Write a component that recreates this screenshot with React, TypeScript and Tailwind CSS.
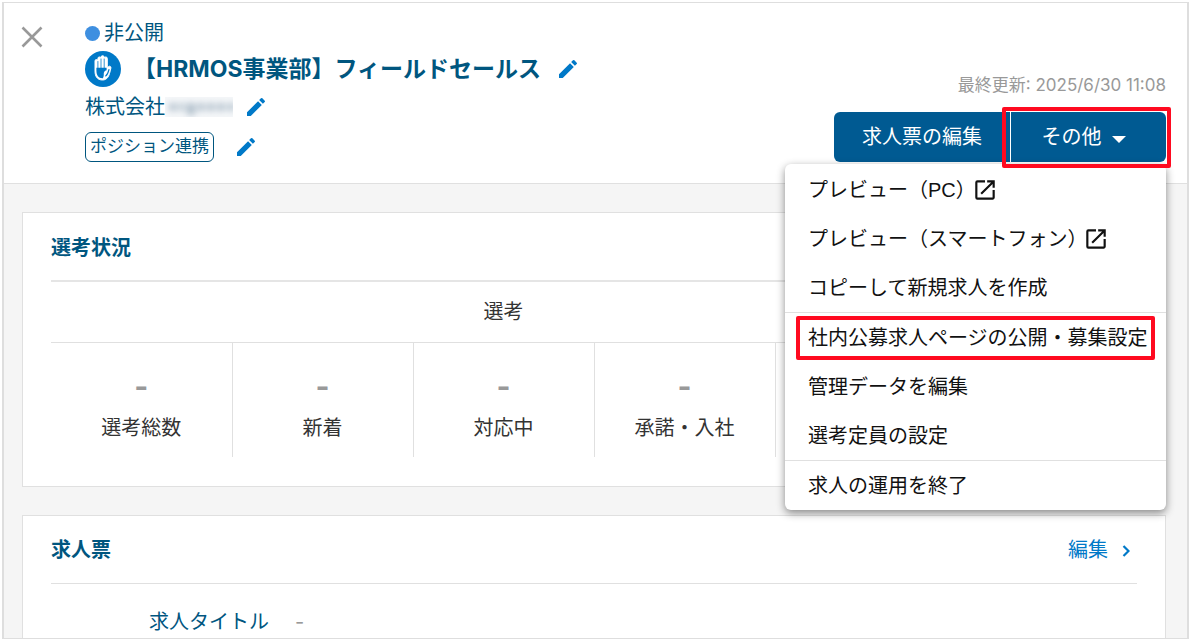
import { MdEdit, MdOpenInNew } from "react-icons/md";

const menuGroups = [
  [
    { label: "プレビュー（PC）", external: true },
    { label: "プレビュー（スマートフォン）", external: true },
    { label: "コピーして新規求人を作成" },
  ],
  [
    { label: "社内公募求人ページの公開・募集設定", marked: true },
    { label: "管理データを編集" },
    { label: "選考定員の設定" },
  ],
  [{ label: "求人の運用を終了" }],
];

const stages = ["選考総数", "新着", "対応中", "承諾・入社"];

const HandIcon = () => (
  <svg viewBox="0 0 36 36" className="size-9 shrink-0" aria-hidden="true">
    <circle cx="18" cy="18" r="18" fill="#0079c8" />
    <path
      d="M10 20V10a1.400 1.400 0 0 1 2.900 0V7.500a1.500 1.500 0 0 1 3.100 0V6.300a1.600 1.600 0 0 1 3.200 0V7.500a1.500 1.500 0 0 1 3.100 0v9.500l1-1.200c.9-1.300 3-.5 2.600 1.200-.9 4-1.600 7.200-3.100 9.300-1.300 1.800-2.900 2.700-5.300 2.700-5.200 0-7.500-3.500-7.500-9z"
      fill="#fff"
      stroke="#fff"
      strokeWidth="1"
      strokeLinejoin="round"
    />
    <path
      d="M11.400 16.800h10.200v2.400c-2.200.6-3 2.200-2.800 4 .1 1.400-.2 2.800-.9 4-4.300.2-6.500-2.600-6.500-7.700z"
      fill="#0079c8"
    />
    <path
      d="M12.900 10.500v7M16 8v9.500M19.200 8v9.500"
      stroke="#0079c8"
      strokeWidth="0.8"
      strokeLinecap="round"
    />
    <path
      d="M24 18.500c-.8 3.300-1.600 5.200-3.300 6.500"
      stroke="#0079c8"
      strokeWidth="1.100"
      fill="none"
      strokeLinecap="round"
    />
  </svg>
);

const EditButton = ({ label, className }: { label: string; className: string }) => (
  <button type="button" aria-label={label} className={`text-[#0079c8] cursor-pointer ${className}`}>
    <MdEdit className="size-6" />
  </button>
);

const ActionMenu = () => (
  <div className="absolute right-0 top-full mt-0.5 z-10 w-[381px] rounded-md bg-white pt-px text-xl text-[#111] shadow-[0_3px_8px_rgba(0,0,0,0.45)]">
    {menuGroups.map((group, i) => (
      <ul key={i} className={i > 0 ? "border-t border-[#e0e0e0]" : ""}>
        {group.map((item) => (
          <li key={item.label} className="relative">
            <button
              type="button"
              className="flex h-[49px] w-full items-center whitespace-nowrap pl-[23px] text-left cursor-pointer"
            >
              {item.label}
              {item.external && <MdOpenInNew className="-ml-1 size-[26px]" />}
            </button>
            {item.marked && (
              <span className="pointer-events-none absolute inset-x-[11px] top-[3px] h-11 border-4 border-[#ff0a20] rounded-xs" />
            )}
          </li>
        ))}
      </ul>
    ))}
  </div>
);

const Header = () => (
  <header className="flex justify-between border-b border-[#e0e0e0] bg-white pr-[21px] pb-[21px] pl-4 text-[#00567f]">
    <div className="flex items-start pt-[17px]">
      <button type="button" aria-label="閉じる" className="mt-[5px] cursor-pointer">
        <svg viewBox="0 0 24 24" className="size-6" aria-hidden="true">
          <path d="M2.500 2.500l19 19M21.500 2.500l-19 19" stroke="#999" strokeWidth="2.600" />
        </svg>
      </button>
      <div className="ml-[41px]">
        <div className="flex h-[26px] items-center gap-1 text-xl">
          <span className="size-[15px] rounded-full bg-[#3e8fe0]" />
          非公開
        </div>
        <div className="mt-[5px] flex h-9 items-center">
          <HandIcon />
          <h1 className="ml-3 whitespace-nowrap font-['Inter','Noto_Sans_CJK_JP',sans-serif] text-[23px] font-bold">
            【HRMOS事業部】フィールドセールス
          </h1>
          <EditButton label="求人名を編集" className="ml-[15px]" />
        </div>
        <div className="mt-1.5 flex h-7 items-center text-xl">
          株式会社
          <span className="flex h-5 w-[68px] items-center overflow-hidden bg-[#f5f7f9]">
            <span className="flex items-center gap-0.5 pl-1 opacity-50 blur-[3px]">
              <span className="h-2 w-2 bg-[#8299ac]" />
              <span className="h-2 w-1.5 bg-[#8ca2b3]" />
              <span className="mt-1 h-3 w-2 bg-[#6f8aa0]" />
              <span className="h-2 w-2 bg-[#8299ac]" />
              <span className="h-2 w-2 bg-[#8299ac]" />
              <span className="h-2 w-2 bg-[#8299ac]" />
              <span className="h-2 w-2 bg-[#8ca2b3]" />
            </span>
          </span>
          <EditButton label="会社名を編集" className="ml-[11px]" />
        </div>
        <div className="mt-[11px] flex h-[30px] items-center">
          <span className="flex h-[30px] items-center whitespace-nowrap rounded-md border border-[#00567f] px-1 text-[17px]">
            ポジション連携
          </span>
          <EditButton label="ポジション連携を編集" className="ml-5" />
        </div>
      </div>
    </div>

    <div className="flex flex-col items-end pt-[70px]">
      <p className="h-6 whitespace-nowrap font-['Inter','Noto_Sans_CJK_JP',sans-serif] text-[17px] leading-6 text-[#999]">
        最終更新: 2025/6/30 11:08
      </p>
      <div className="relative mt-[15px] flex h-[50px] gap-px text-xl text-white">
        <button type="button" className="w-44 rounded-l-md bg-[#005a92] cursor-pointer">
          求人票の編集
        </button>
        <div className="relative flex">
          <button
            type="button"
            aria-expanded="true"
            className="flex w-[155px] items-center justify-center gap-2.5 rounded-r-md bg-[#005a92] pr-2.5 cursor-pointer"
          >
            その他
            <svg viewBox="0 0 14 7" className="mt-1 h-[7px] w-3.5" aria-hidden="true">
              <path d="M0 0h14L7 7z" fill="#fff" />
            </svg>
          </button>
          <span className="pointer-events-none absolute -top-[5px] -right-[5px] -bottom-[6px] -left-[9px] z-20 rounded-xs border-4 border-[#ff0a20]" />
        </div>
        <ActionMenu />
      </div>
    </div>
  </header>
);

const StatusCard = () => (
  <section className="border border-[#e0e0e0] bg-white px-7 pb-[29px]">
    <h2 className="flex h-[67px] items-center pt-0.5 text-xl font-bold text-[#00567f]">選考状況</h2>
    <table className="w-full table-fixed border-collapse border-t-2 border-[#e5e5e5] text-xl text-[#333]">
      <thead>
        <tr className="h-[61px] border-b border-[#e0e0e0]">
          <th colSpan={5} className="font-normal">
            選考
          </th>
          <th />
        </tr>
      </thead>
      <tbody>
        <tr className="h-[115px] divide-x divide-[#e0e0e0] text-center">
          {stages.map((stage) => (
            <td key={stage} className="pt-3 align-middle">
              <div className="mb-3 h-8 font-[Inter] text-3xl leading-8 font-bold text-[#999]">-</div>
              <div>{stage}</div>
            </td>
          ))}
          <td />
          <td />
        </tr>
      </tbody>
    </table>
  </section>
);

const JobCard = () => (
  <section className="border border-[#e0e0e0] bg-white px-7 pb-7">
    <div className="flex h-[68px] items-center justify-between border-b border-[#e0e0e0]">
      <h2 className="text-xl font-bold text-[#00567f]">求人票</h2>
      <a href="#edit" className="flex items-center gap-3.5 pr-[7px] text-xl text-[#0079c8]">
        編集
        <svg viewBox="0 0 8 12" className="mt-0.5 h-3 w-2" aria-hidden="true">
          <path d="M1.500 1l5 5-5 5" fill="none" stroke="#0079c8" strokeWidth="2.200" />
        </svg>
      </a>
    </div>
    <dl className="flex h-[76px] items-center text-xl">
      <dt className="w-[218px] text-right text-[#00567f]">求人タイトル</dt>
      <dd className="ml-[26px] font-[Inter] text-[#999]">-</dd>
    </dl>
  </section>
);

export default function App() {
  return (
    <div className="h-screen bg-white pt-0.5 pr-1.5 pb-[3px] pl-0.5 font-['Liberation_Sans','Noto_Sans_CJK_JP',sans-serif]">
      <div className="h-full overflow-hidden border-x-2 border-y border-[#dedede] bg-[#f5f5f5]">
        <Header />
        <main className="flex flex-col gap-7 pt-7 pr-[21px] pl-[18px]">
          <StatusCard />
          <JobCard />
        </main>
      </div>
    </div>
  );
}
